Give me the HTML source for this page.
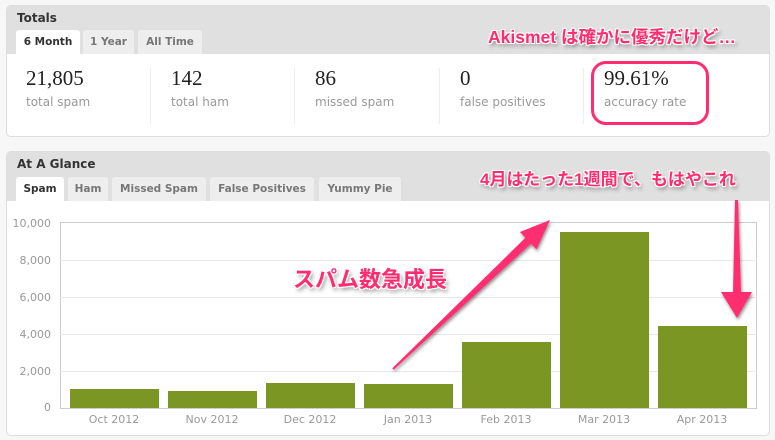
<!DOCTYPE html>
<html><head><meta charset="utf-8"><style>
*{margin:0;padding:0;box-sizing:border-box}
body{width:775px;height:440px;background:#f7f7f7;font-family:"DejaVu Sans","Liberation Sans",sans-serif;position:relative;overflow:hidden}
.panel{position:absolute;left:6px;width:764px;background:#fff;border:1px solid #ddd;border-radius:5px;overflow:hidden}
.hd{background:#e0e0e0;position:relative}
.hd h3{position:absolute;left:10px;font-size:12px;font-weight:bold;color:#333}
.tab{position:absolute;bottom:0;height:24px;background:#eee;color:#777;font-size:10.5px;font-weight:bold;line-height:25px;text-align:center;border-radius:3px 3px 0 0;white-space:nowrap}
.tab.on{background:#fff;color:#333}
.stat{position:absolute;top:66px}
.stat .n{font-family:"Liberation Serif",serif;font-size:21px;color:#222}
.stat .l{font-size:12px;color:#999;margin-top:4px}
.div{position:absolute;top:68px;width:1px;height:56px;background:#eee}
.ann{position:absolute;color:#ff2d6f;font-weight:bold;font-family:"Liberation Sans","Noto Sans CJK JP",sans-serif;text-shadow:0 0 2px #fff,0 0 2px #fff,1px 1px 0 #fff,-1px -1px 0 #fff,1px -1px 0 #fff,-1px 1px 0 #fff,2px 3px 4px rgba(0,0,0,.45);white-space:nowrap}
.yl{position:absolute;right:724px;font-size:11px;color:#999;text-align:right}
.ml{position:absolute;top:413px;font-size:11px;color:#999;width:98px;text-align:center}
.bar{position:absolute;background:#7b9622;width:89px}
.gl{position:absolute;left:60px;width:697px;height:1px;background:#e8e8e8}
</style></head><body>
<div class="panel" style="top:5px;height:132px">
 <div class="hd" style="height:48px"><h3 style="top:5px">Totals</h3>
  <div class="tab on" style="left:9px;width:64px">6 Month</div>
  <div class="tab" style="left:76px;width:51px">1 Year</div>
  <div class="tab" style="left:131px;width:64px">All Time</div>
 </div>
</div>
<div class="stat" style="left:26px"><div class="n">21,805</div><div class="l">total spam</div></div>
<div class="div" style="left:150px"></div>
<div class="stat" style="left:171px"><div class="n">142</div><div class="l">total ham</div></div>
<div class="div" style="left:294px"></div>
<div class="stat" style="left:315px"><div class="n">86</div><div class="l">missed spam</div></div>
<div class="div" style="left:439px"></div>
<div class="stat" style="left:460px"><div class="n">0</div><div class="l">false positives</div></div>
<div class="div" style="left:583px"></div>
<div class="stat" style="left:604px"><div class="n">99.61%</div><div class="l">accuracy rate</div></div>
<div style="position:absolute;left:591px;top:61px;width:118px;height:64px;border:3px solid #ff2d6f;border-radius:15px"></div>
<div class="ann" style="left:488px;top:24px;font-size:17.5px">Akismet は確かに優秀だけど…</div>

<div class="panel" style="top:151px;height:285px">
 <div class="hd" style="height:49px"><h3 style="top:5px">At A Glance</h3>
  <div class="tab on" style="left:9px;width:48px">Spam</div>
  <div class="tab" style="left:61px;width:40px">Ham</div>
  <div class="tab" style="left:105px;width:94px">Missed Spam</div>
  <div class="tab" style="left:203px;width:104px">False Positives</div>
  <div class="tab" style="left:312px;width:82px">Yummy Pie</div>
 </div>
</div>
<div style="position:absolute;left:60px;top:222px;width:697px;height:187px;border:1px solid #ccc"></div>
<div class="gl" style="top:260px"></div><div class="gl" style="top:297px"></div><div class="gl" style="top:334px"></div><div class="gl" style="top:371px"></div>
<div class="yl" style="top:217px">10,000</div>
<div class="yl" style="top:254px">8,000</div>
<div class="yl" style="top:291px">6,000</div>
<div class="yl" style="top:328px">4,000</div>
<div class="yl" style="top:365px">2,000</div>
<div class="yl" style="top:401px">0</div>
<div class="bar" style="left:70px;top:389px;height:19px"></div>
<div class="bar" style="left:168px;top:391px;height:17px"></div>
<div class="bar" style="left:266px;top:383px;height:25px"></div>
<div class="bar" style="left:364px;top:384px;height:24px"></div>
<div class="bar" style="left:462px;top:342px;height:66px"></div>
<div class="bar" style="left:560px;top:232px;height:176px"></div>
<div class="bar" style="left:658px;top:326px;height:82px"></div>
<div class="ml" style="left:65px">Oct 2012</div>
<div class="ml" style="left:163px">Nov 2012</div>
<div class="ml" style="left:261px">Dec 2012</div>
<div class="ml" style="left:359px">Jan 2013</div>
<div class="ml" style="left:457px">Feb 2013</div>
<div class="ml" style="left:555px">Mar 2013</div>
<div class="ml" style="left:653px">Apr 2013</div>
<svg style="position:absolute;left:0;top:0" width="775" height="440">
<defs><filter id="s" x="-20%" y="-20%" width="140%" height="140%"><feDropShadow dx="1" dy="2" stdDeviation="1.5" flood-opacity="0.45"/></filter></defs>
<polygon filter="url(#s)" fill="#ff2d6f" points="393.7,369.7 531,243.6 536.5,249.4 550,220 519.9,232 525.4,237.8 392.3,368.3"/>
<polygon filter="url(#s)" fill="#ff2d6f" points="735,200 738,200 741,292 752,292 737,318 721,292 733,292"/>
</svg>
<div class="ann" style="left:293px;top:262px;font-size:22px">スパム数急成長</div>
<div class="ann" style="left:480px;top:165px;font-size:17px">4月はたった1週間で、もはやこれ</div>
</body></html>
